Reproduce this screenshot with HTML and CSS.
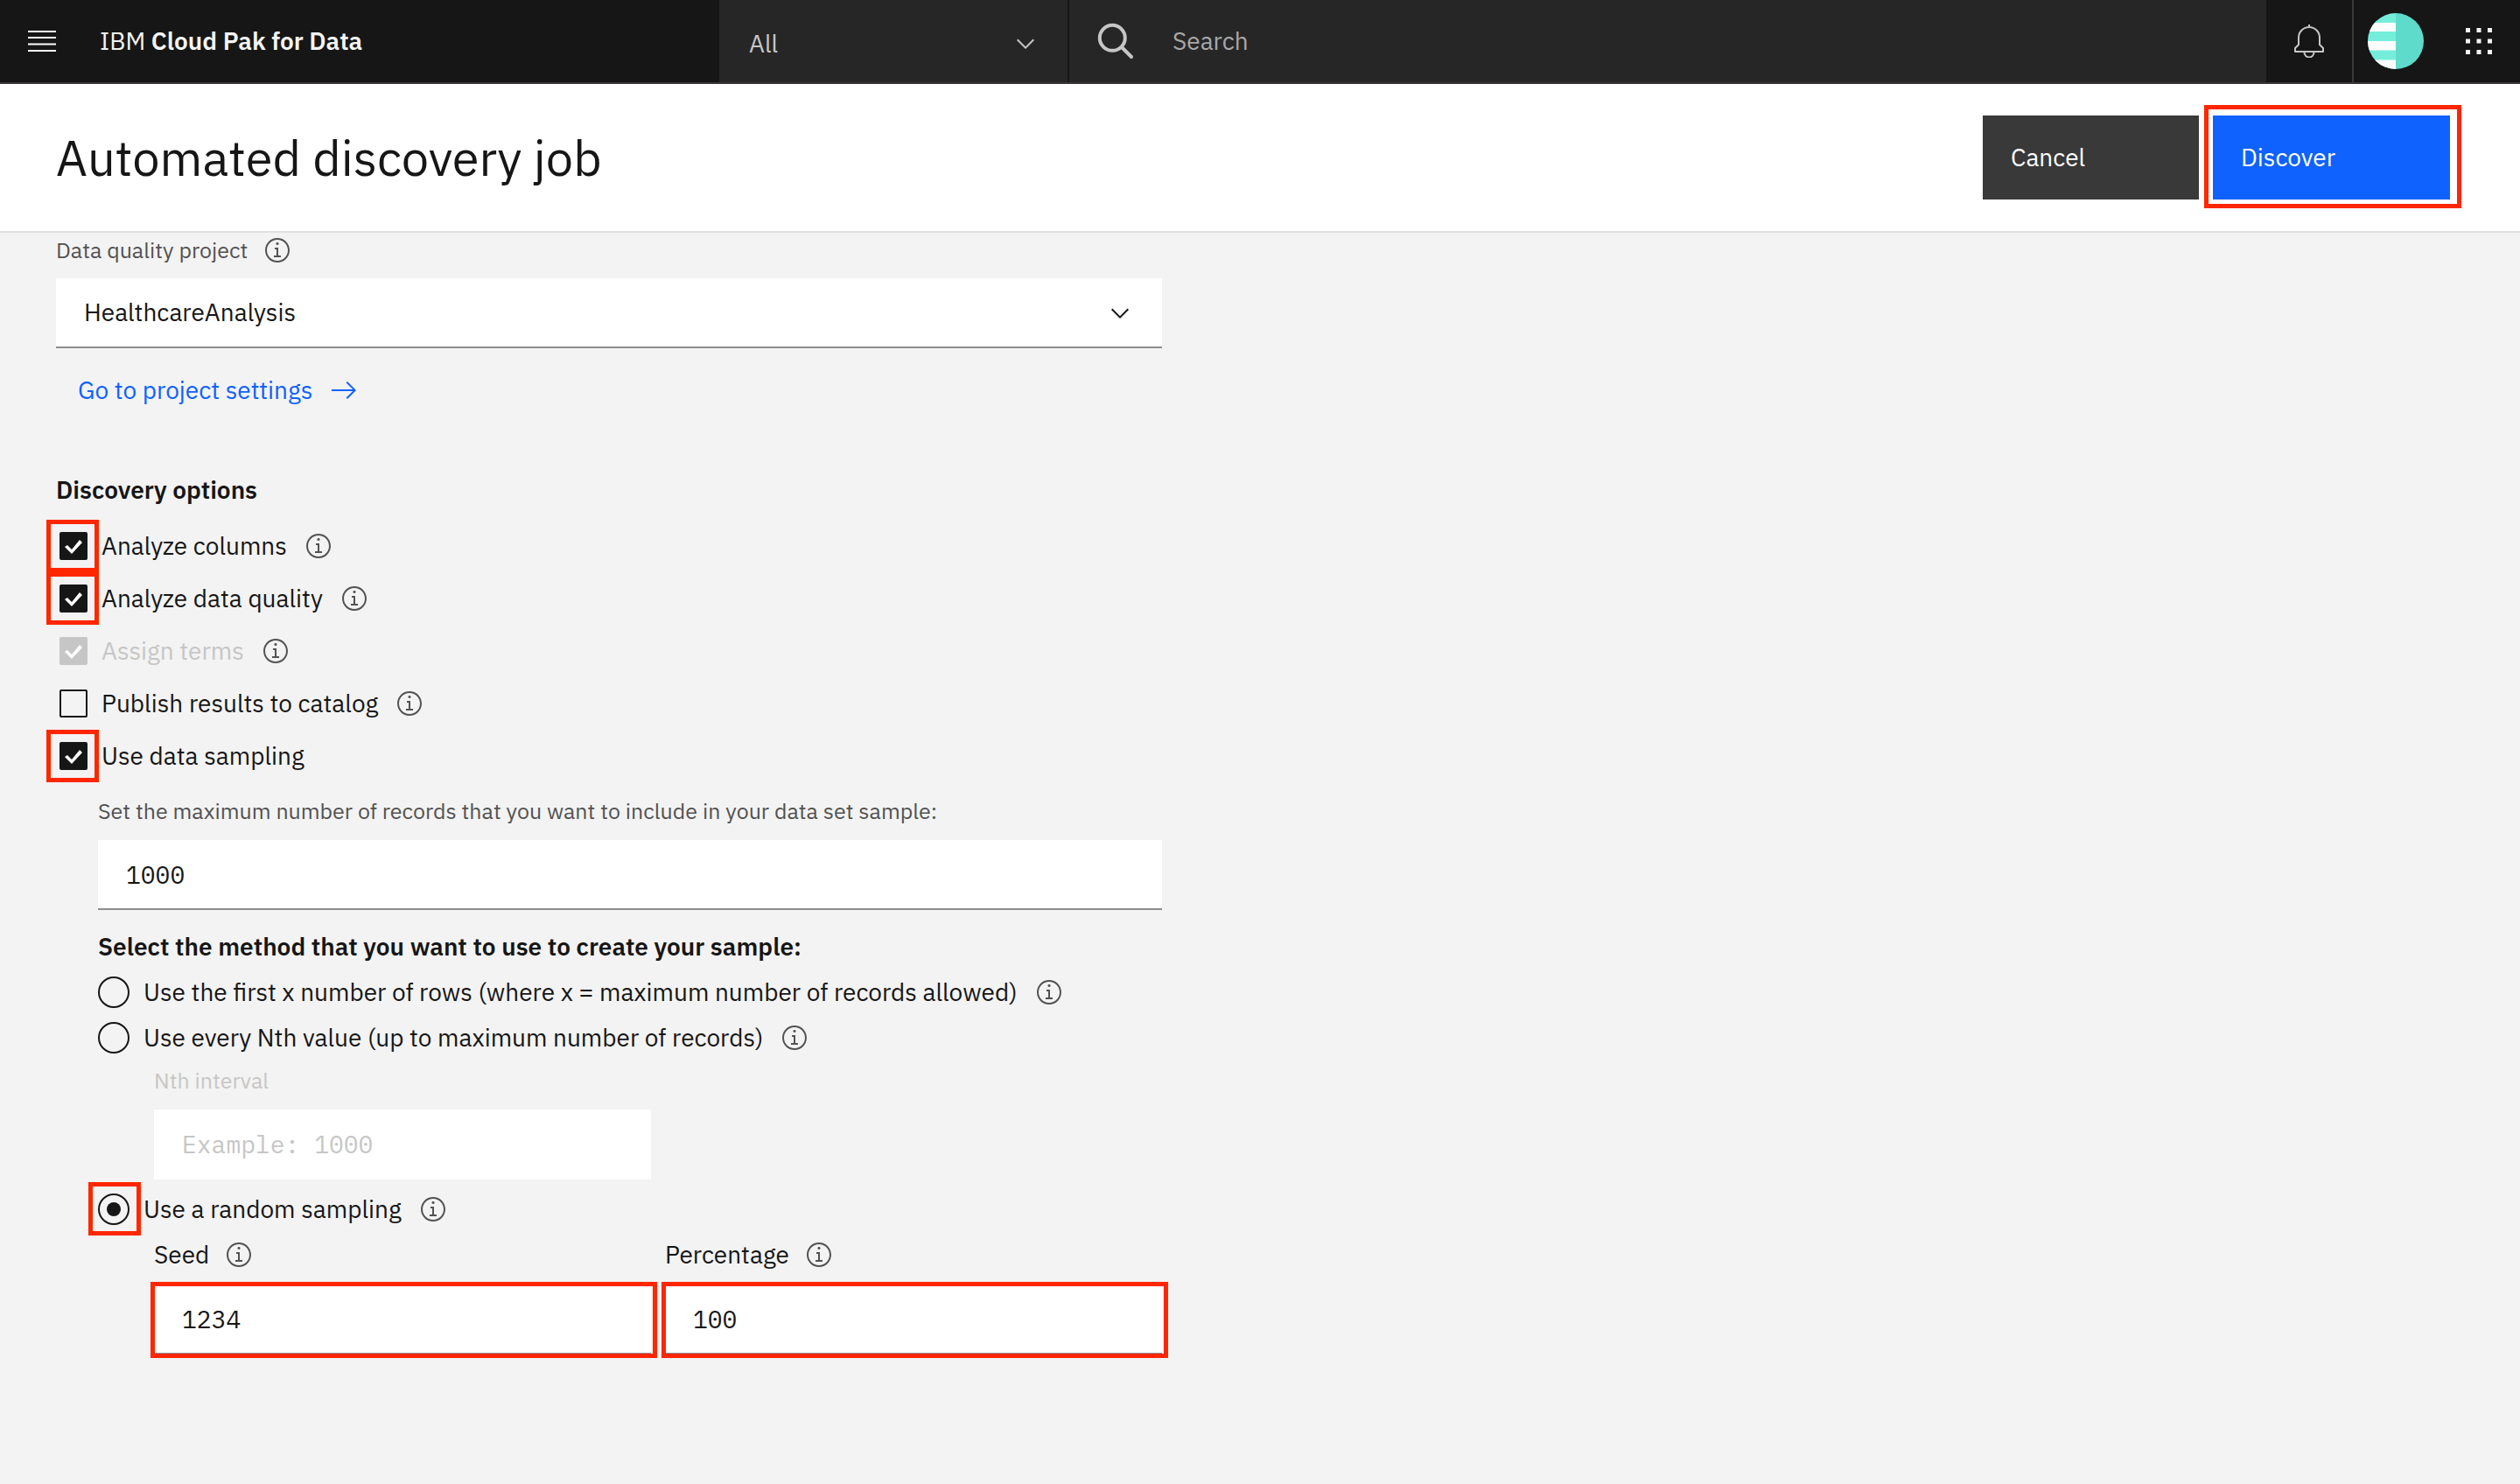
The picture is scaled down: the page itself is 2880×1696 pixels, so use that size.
FILE: index.html
```html
<!DOCTYPE html>
<html lang="en">
<head>
<meta charset="utf-8">
<title>Automated discovery job</title>
<link rel="stylesheet" href="styles.css">
</head>
<body>
<svg class="sprite" aria-hidden="true">
  <symbol id="info" viewBox="0 0 16 16">
    <path d="M8.5 11V6.5h-2v1h1V11H6v1h4v-1zM8 3.5c-.4 0-.8.3-.8.8s.4.7.8.7.8-.4.8-.8-.4-.7-.8-.7z"/>
    <path d="M8 15c-3.900 0-7-3.100-7-7s3.100-7 7-7 7 3.100 7 7-3.100 7-7 7zM8 2C4.700 2 2 4.700 2 8s2.700 6 6 6 6-2.700 6-6-2.700-6-6-6z"/>
  </symbol>
  <symbol id="chevron" viewBox="0 0 16 16">
    <path d="M8 11L3 6l.7-.7L8 9.600l4.300-4.300.7.7z"/>
  </symbol>
</svg>

<header class="topbar">
  <div class="brand">
    <button class="icon-button" type="button" aria-label="Menu">
      <svg width="32" height="24" viewBox="0 0 32 24" fill="#fff"><path d="M0 0h32v2H0zM0 7h32v2H0zM0 14.500h32v2H0zM0 22h32v2H0z"/></svg>
    </button>
    <a class="brand-name" href="#">IBM <b>Cloud Pak for Data</b></a>
  </div>
  <div class="scope">
    <select class="scope-select" aria-label="Search scope"><option>All</option></select>
    <svg class="select-arrow" width="32" height="32"><use href="#chevron"/></svg>
  </div>
  <label class="search">
    <svg width="42" height="42" viewBox="0 0 42 42" fill="none" stroke="#c6c6c6" stroke-width="4" stroke-linecap="round"><circle cx="17.300" cy="17.300" r="14.500"/><path d="M28 28l11 11"/></svg>
    <input class="search-input" type="text" placeholder="Search" aria-label="Search">
  </label>
  <button class="tool tool-bell" type="button" aria-label="Notifications">
    <svg width="34" height="38" viewBox="0 0 34 38" fill="none" stroke="#c6c6c6" stroke-width="2" stroke-linejoin="round"><path d="M17 0v3M1 31v-4l4-4v-8a12 12 0 0 1 24 0v8l4 4v4zM11.500 31v1a5.500 5.500 0 0 0 11 0v-1"/></svg>
  </button>
  <button class="tool" type="button" aria-label="Profile">
    <svg width="64" height="64" viewBox="0 0 64 64">
      <clipPath id="avatar"><circle cx="32" cy="32" r="32"/></clipPath>
      <g clip-path="url(#avatar)">
        <path fill="#74eeda" d="M0 0h32v64H0z"/>
        <path fill="#fcfcfc" d="M0 11h32v10H0zM0 32h32v10.500H0zM0 53.500h32V64H0z"/>
        <path fill="#5fdbcb" d="M32 0h32v64H32z"/>
      </g>
    </svg>
  </button>
  <button class="tool" type="button" aria-label="App switcher">
    <svg width="30" height="30" viewBox="0 0 30 30" fill="#f4f4f4"><path d="M0 0h5v5H0zM12.500 0h5v5h-5zM25 0h5v5h-5zM0 12.500h5v5H0zM12.500 12.500h5v5h-5zM25 12.500h5v5h-5zM0 25h5v5H0zM12.500 25h5v5h-5zM25 25h5v5h-5z"/></svg>
  </button>
</header>

<div class="titlebar">
  <h1 class="title">Automated discovery job</h1>
  <div class="actions">
    <button class="button button-secondary" type="button">Cancel</button>
    <button class="button button-primary mark mark-button" type="button">Discover</button>
  </div>
</div>

<main class="content">
  <form class="form">
    <div class="label-row">
      <label class="small-label" for="project">Data quality project</label>
      <button class="info" type="button" aria-label="About data quality project"><svg><use href="#info"/></svg></button>
    </div>
    <div class="select-wrap">
      <select class="field select-field" id="project"><option>HealthcareAnalysis</option></select>
      <svg class="select-arrow" width="32" height="32"><use href="#chevron"/></svg>
    </div>
    <a class="link" href="#">Go to project settings
      <svg width="32" height="32" viewBox="0 0 16 16" fill="currentColor"><path d="M9.300 3.700l3.800 3.800H1v1h12.100l-3.800 3.800.7.7 5-5-5-5z"/></svg>
    </a>

    <h2 class="heading">Discovery options</h2>
    <div class="check-row">
      <span class="mark mark-check"><input class="checkbox" type="checkbox" id="columns" checked></span>
      <label for="columns">Analyze columns</label>
      <button class="info" type="button" aria-label="About analyze columns"><svg><use href="#info"/></svg></button>
    </div>
    <div class="check-row">
      <span class="mark mark-check"><input class="checkbox" type="checkbox" id="quality" checked></span>
      <label for="quality">Analyze data quality</label>
      <button class="info" type="button" aria-label="About analyze data quality"><svg><use href="#info"/></svg></button>
    </div>
    <div class="check-row">
      <input class="checkbox" type="checkbox" id="terms" checked disabled>
      <label class="disabled" for="terms">Assign terms</label>
      <button class="info" type="button" aria-label="About assign terms"><svg><use href="#info"/></svg></button>
    </div>
    <div class="check-row">
      <input class="checkbox" type="checkbox" id="publish">
      <label for="publish">Publish results to catalog</label>
      <button class="info" type="button" aria-label="About publish results"><svg><use href="#info"/></svg></button>
    </div>
    <div class="check-row">
      <span class="mark mark-check"><input class="checkbox" type="checkbox" id="sampling" checked></span>
      <label for="sampling">Use data sampling</label>
    </div>

    <div class="sampling">
      <label class="small-label small-block" for="records">Set the maximum number of records that you want to include in your data set sample:</label>
      <input class="field text-field" type="text" id="records" value="1000">

      <h3 class="heading method-heading">Select the method that you want to use to create your sample:</h3>
      <div class="radio-row">
        <input class="radio" type="radio" name="method" id="first">
        <label for="first">Use the first x number of rows (where x = maximum number of records allowed)</label>
        <button class="info" type="button" aria-label="About first rows"><svg><use href="#info"/></svg></button>
      </div>
      <div class="radio-row">
        <input class="radio" type="radio" name="method" id="nth">
        <label for="nth">Use every Nth value (up to maximum number of records)</label>
        <button class="info" type="button" aria-label="About Nth value"><svg><use href="#info"/></svg></button>
      </div>
      <div class="columns">
        <div class="column">
          <label class="small-label small-block disabled" for="interval">Nth interval</label>
          <input class="field text-field" type="text" id="interval" placeholder="Example: 1000" disabled>
        </div>
      </div>
      <div class="radio-row random-row">
        <span class="mark mark-radio"><input class="radio" type="radio" name="method" id="random" checked></span>
        <label for="random">Use a random sampling</label>
        <button class="info" type="button" aria-label="About random sampling"><svg><use href="#info"/></svg></button>
      </div>
      <div class="columns">
        <div class="column">
          <div class="column-label">
            <label for="seed">Seed</label>
            <button class="info" type="button" aria-label="About seed"><svg><use href="#info"/></svg></button>
          </div>
          <div class="mark mark-field"><input class="field text-field" type="text" id="seed" value="1234"></div>
        </div>
        <div class="column">
          <div class="column-label">
            <label for="percentage">Percentage</label>
            <button class="info" type="button" aria-label="About percentage"><svg><use href="#info"/></svg></button>
          </div>
          <div class="mark mark-field"><input class="field text-field" type="text" id="percentage" value="100"></div>
        </div>
      </div>
    </div>
  </form>
</main>
</body>
</html>
```
FILE: styles.css
```css
* {
  box-sizing: border-box;
}

body {
  margin: 0;
  min-height: 100vh;
  background: #f3f3f3;
  color: #161616;
  font-family: "IBM Plex Sans", Roboto, "Liberation Sans", sans-serif;
  font-size: 28px;
  line-height: 40px;
}

button,
input,
select {
  margin: 0;
  padding: 0;
  border: 0;
  border-radius: 0;
  background: none;
  color: inherit;
  font: inherit;
  appearance: none;
}

svg {
  display: block;
  flex: none;
}

.sprite {
  position: absolute;
  width: 0;
  height: 0;
}

/* Top bar */
.topbar {
  display: flex;
  height: 96px;
  border-bottom: 2px solid #393536;
  background: #161616;
  color: #f4f4f4;
}

.brand {
  display: flex;
  align-items: center;
  flex: 0 1 822px;
  gap: 50px;
  padding-left: 32px;
}

.brand-name {
  color: inherit;
  text-decoration: none;
}

.brand-name b {
  font-weight: 600;
}

.scope,
.select-wrap {
  display: grid;
  align-items: center;
}

.scope > *,
.select-wrap > * {
  grid-area: 1 / 1;
}

.scope {
  width: 400px;
  padding-top: 6px;
  border-right: 2px solid #161616;
  background: #262626;
  color: #c6c6c6;
}

.scope-select {
  padding: 0 80px 0 34px;
}

.select-arrow {
  justify-self: end;
  margin-right: 32px;
  fill: currentColor;
  pointer-events: none;
}

.search {
  display: flex;
  align-items: center;
  flex: 1;
  gap: 44px;
  padding-left: 32px;
  background: #262626;
}

.search-input {
  flex: 1;
  min-width: 0;
}

.search-input::placeholder {
  color: #a8a8a8;
}

.tool {
  display: flex;
  align-items: center;
  justify-content: center;
  width: 95px;
}

.tool-bell {
  width: 100px;
  border-right: 2px solid #393939;
}

/* Title bar */
.titlebar {
  display: flex;
  align-items: center;
  justify-content: space-between;
  height: 170px;
  padding: 0 80px 0 64px;
  border-bottom: 2px solid #e0e0e0;
  background: #fff;
}

.title {
  margin: 0;
  font-size: 56px;
  font-weight: 400;
  line-height: 72px;
}

.actions {
  display: flex;
  gap: 16px;
}

.button {
  height: 96px;
  padding: 0 32px;
  color: #fff;
  text-align: left;
}

.button-secondary {
  width: 247px;
  background: #393939;
}

.button-primary {
  width: 271px;
  background: #0f62fe;
}

/* Red highlight drawn around a control */
.mark {
  position: relative;
}

.mark::after {
  position: absolute;
  inset: -12px -13px -10px -10px;
  border: 5px solid #ff2600;
  content: "";
  pointer-events: none;
}

.mark-check::after {
  inset: -14px -13px -14px -15px;
}

.mark-radio::after {
  inset: -13px -13px -12px -11px;
}

.mark-field::after {
  inset: -3px -7px -4px -4px;
}

/* Form */
.content {
  padding: 0 64px 64px;
}

.form {
  max-width: 1264px;
}

.label-row {
  display: flex;
  align-items: center;
  gap: 20px;
  height: 40px;
  margin-bottom: 12px;
}

.small-label {
  color: #525252;
  font-size: 25px;
  line-height: 34px;
}

.small-block {
  display: block;
  margin-bottom: 16px;
}

.disabled,
.small-label.disabled {
  color: #c6c6c6;
}

.info {
  width: 28px;
  height: 28px;
}

.info svg {
  width: 32px;
  height: 32px;
  margin: -2px;
  fill: #525252;
}

.field {
  display: block;
  width: 100%;
  height: 80px;
  padding: 0 32px;
  border-bottom: 2px solid #8d8d8d;
  background: #fff;
}

.text-field {
  font-family: "IBM Plex Mono", "Liberation Mono", monospace;
}

.text-field:disabled {
  border-color: transparent;
}

.text-field::placeholder {
  color: #c6c6c6;
}

.link {
  display: inline-flex;
  align-items: center;
  gap: 20px;
  height: 48px;
  margin-top: 24px;
  padding-left: 25px;
  color: #0f62fe;
  text-decoration: none;
}

.heading {
  margin: 70px 0 14px;
  font-size: 28px;
  font-weight: 600;
  line-height: 40px;
}

.method-heading {
  margin: 22px 0 6px;
}

.check-row,
.radio-row {
  display: flex;
  align-items: center;
  gap: 16px;
}

.check-row {
  height: 60px;
  padding-left: 4px;
}

.radio-row {
  height: 52px;
}

.random-row {
  margin-top: 8px;
}

.check-row .info,
.radio-row .info {
  margin-left: 6px;
}

.checkbox,
.radio {
  display: block;
  flex: none;
  border: 2px solid #161616;
}

.checkbox {
  width: 32px;
  height: 32px;
  border-radius: 2px;
}

.checkbox:checked {
  background: #161616;
}

.checkbox:checked::before {
  display: block;
  width: 32px;
  height: 32px;
  margin: -2px;
  background: #fff;
  clip-path: polygon(6px 17px, 9px 15px, 14px 20px, 23px 9px, 26px 12px, 14px 25px);
  content: "";
}

.checkbox:disabled {
  border-color: #c6c6c6;
  background: #c6c6c6;
}

.radio {
  display: grid;
  place-items: center;
  width: 36px;
  height: 36px;
  border-radius: 50%;
}

.radio:checked::before {
  width: 16px;
  height: 16px;
  border-radius: 50%;
  background: #161616;
  content: "";
}

.sampling {
  margin-top: 16px;
  padding-left: 48px;
}

.columns {
  display: grid;
  grid-template-columns: 1fr 1fr;
  gap: 16px;
  margin-top: 6px;
  padding-left: 64px;
}

.random-row + .columns {
  margin-top: 0;
}

.column-label {
  display: flex;
  align-items: center;
  gap: 20px;
  height: 52px;
  margin-bottom: 8px;
}
```
